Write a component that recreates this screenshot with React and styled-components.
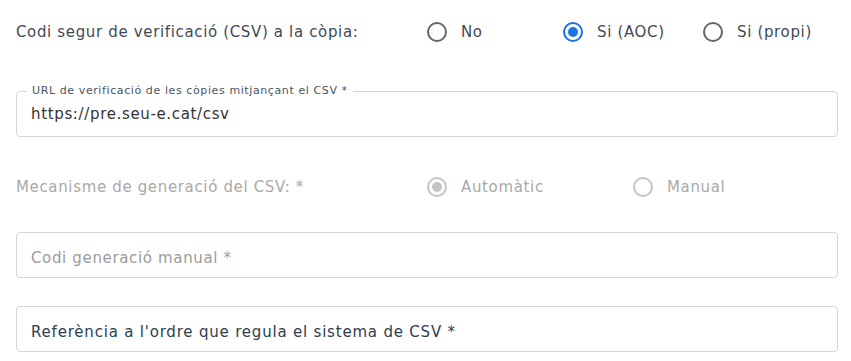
import React from 'react'
import styled, { createGlobalStyle, css } from 'styled-components'

const Global = createGlobalStyle`
  body {
    margin: 0;
    background: #ffffff;
    font-family: "DejaVu Sans", "Liberation Sans", sans-serif;
    letter-spacing: 0.65px;
  }
`

const Page = styled.div`
  width: 822px;
  padding: 20px 13px 0 16px;
`

const RadioRow = styled.div`
  display: grid;
  grid-template-columns: 411px 1fr;
  align-items: center;
  height: 24px;
  margin-top: ${p => p.$top}px;
  font-size: 15px;
  color: ${p => (p.$disabled ? '#a9a9a9' : '#3f4a54')};
`

const Group = styled.div`
  display: flex;
  align-items: center;
`

const Option = styled.label`
  display: flex;
  align-items: center;
  gap: 14px;
  width: ${p => p.$w}px;
  color: ${p => (p.$disabled ? '#a9a9a9' : '#3f4a54')};
`

const Circle = styled.span`
  box-sizing: border-box;
  width: 20px;
  height: 20px;
  border-radius: 50%;
  border: 2px solid #666;
  display: flex;
  align-items: center;
  justify-content: center;

  ${p => p.$checked && css`
    border-color: #1a73e8;
    &::after {
      content: '';
      width: 10px;
      height: 10px;
      border-radius: 50%;
      background: #1a73e8;
    }
  `}

  ${p => p.$disabled && css`
    border-color: #c4c4c4;
    &::after { background: #c4c4c4; }
  `}
`

const Box = styled.div`
  position: relative;
  box-sizing: border-box;
  height: 46px;
  margin-top: ${p => p.$top}px;
  border: 1px solid #d6d6d6;
  border-radius: 4px;
  display: flex;
  align-items: center;
  padding: ${p => p.$pad || 0}px 14px 0;
  font-size: 15px;
  letter-spacing: ${p => p.$ls || 0.65}px;
  color: ${p => p.$color || '#333'};
`

const Legend = styled.span`
  position: absolute;
  left: 10px;
  top: -8px;
  padding: 0 5px;
  background: #fff;
  font-size: 11px;
  letter-spacing: 0.6px;
  color: #4a5560;
`

const Radio = ({ label, checked, disabled, w }) => (
  <Option $w={w} $disabled={disabled}>
    <Circle $checked={checked} $disabled={disabled} />
    {label}
  </Option>
)

export default function App() {
  return (
    <Page>
      <Global />
      <RadioRow $top={0}>
        <span>Codi segur de verificació (CSV) a la còpia:</span>
        <Group>
          <Radio label="No" w={136} />
          <Radio label="Si (AOC)" w={140} checked />
          <Radio label="Si (propi)" />
        </Group>
      </RadioRow>

      <Box $top={47}>
        <Legend>URL de verificació de les còpies mitjançant el CSV *</Legend>
        https://pre.seu-e.cat/csv
      </Box>

      <RadioRow $top={38} $disabled>
        <span>Mecanisme de generació del CSV: *</span>
        <Group>
          <Radio label="Automàtic" w={206} checked disabled />
          <Radio label="Manual" disabled />
        </Group>
      </RadioRow>

      <Box $top={33} $pad={5} $color="#9b9b9b">Codi generació manual *</Box>
      <Box $top={28} $pad={5} $ls={0.8} $color="#2c3e50">Referència a l'ordre que regula el sistema de CSV *</Box>
    </Page>
  )
}
